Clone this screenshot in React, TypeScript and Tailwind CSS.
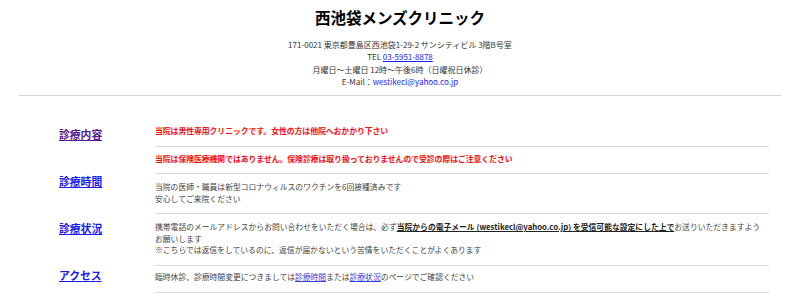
export default function App() {
  const nav = [
    { label: '診療内容', cls: 'text-[#551a8b]' },
    { label: '診療時間', cls: 'text-[#1a1aee]' },
    { label: '診療状況', cls: 'text-[#1a1aee]' },
    { label: 'アクセス', cls: 'text-[#1a1aee]' },
  ];

  return (
    <div className="w-[800px] h-[296px] overflow-hidden bg-white font-['Noto_Sans_CJK_JP','Noto_Sans',sans-serif]">
      <header className="pt-[7px] text-center">
        <h1 className="text-[15.5px] font-bold leading-[20px] text-black">西池袋メンズクリニック</h1>
        <div className="mt-[12px] text-[8px] leading-[12.3px] text-[#333]">
          <p>171-0021 東京都豊島区西池袋1-29-2 サンシティビル 3階B号室</p>
          <p>
            TEL <a href="#" className="text-[#2323e6] underline">03-5951-8878</a>
          </p>
          <p>月曜日～土曜日 12時～午後6時（日曜祝日休診）</p>
          <p>
            E-Mail：<a href="#" className="text-[#2323e6]">westikecl@yahoo.co.jp</a>
          </p>
        </div>
      </header>

      <hr className="mt-[7px] mx-[19px] border-0 border-t border-[#d4d4d4]" />

      <div className="flex">
        <nav className="w-[155px] pl-[59px] pt-[30px] flex flex-col">
          {nav.map((n) => (
            <a
              key={n.label}
              href="#"
              className={`h-[47px] text-[10.8px] font-bold leading-[16px] underline ${n.cls}`}
            >
              {n.label}
            </a>
          ))}
        </nav>

        <main className="w-[614px] mt-[23px] text-[7.8px] leading-[11.5px]">
          <div className="pt-[6px] pb-[9px] border-b border-[#dcdcdc] font-bold text-[#f01010]">
            当院は男性専用クリニックです。女性の方は他院へおかかり下さい
          </div>
          <div className="pt-[6px] pb-[9px] border-b border-[#dcdcdc] font-bold text-[#f01010]">
            当院は保険医療機関ではありません。保険診療は取り扱っておりませんので受診の際はご注意ください
          </div>
          <div className="pt-[7px] pb-[9px] border-b border-[#dcdcdc] text-[#444]">
            <p>当院の医師・職員は新型コロナウィルスのワクチンを6回接種済みです</p>
            <p>安心してご来院ください</p>
          </div>
          <div className="pt-[7px] pb-[9px] border-b border-[#dcdcdc] text-[#444] whitespace-nowrap">
            <p>
              携帯電話のメールアドレスからお問い合わせをいただく場合は、必ず
              <span className="font-bold text-[#222] underline">
                当院からの電子メール (westikecl@yahoo.co.jp) を受信可能な設定にした上で
              </span>
              お送りいただきますよう
            </p>
            <p>お願いします</p>
            <p>※こちらでは返信をしているのに、返信が届かないという苦情をいただくことがよくあります</p>
          </div>
          <div className="pt-[5px] pb-[10px] border-b border-[#dcdcdc] text-[#444]">
            臨時休診、診療時間変更につきましては
            <a href="#" className="text-[#3b3bd6] underline">診療時間</a>
            または
            <a href="#" className="text-[#3b3bd6] underline">診療状況</a>
            のページでご確認ください
          </div>
        </main>
      </div>
    </div>
  );
}
